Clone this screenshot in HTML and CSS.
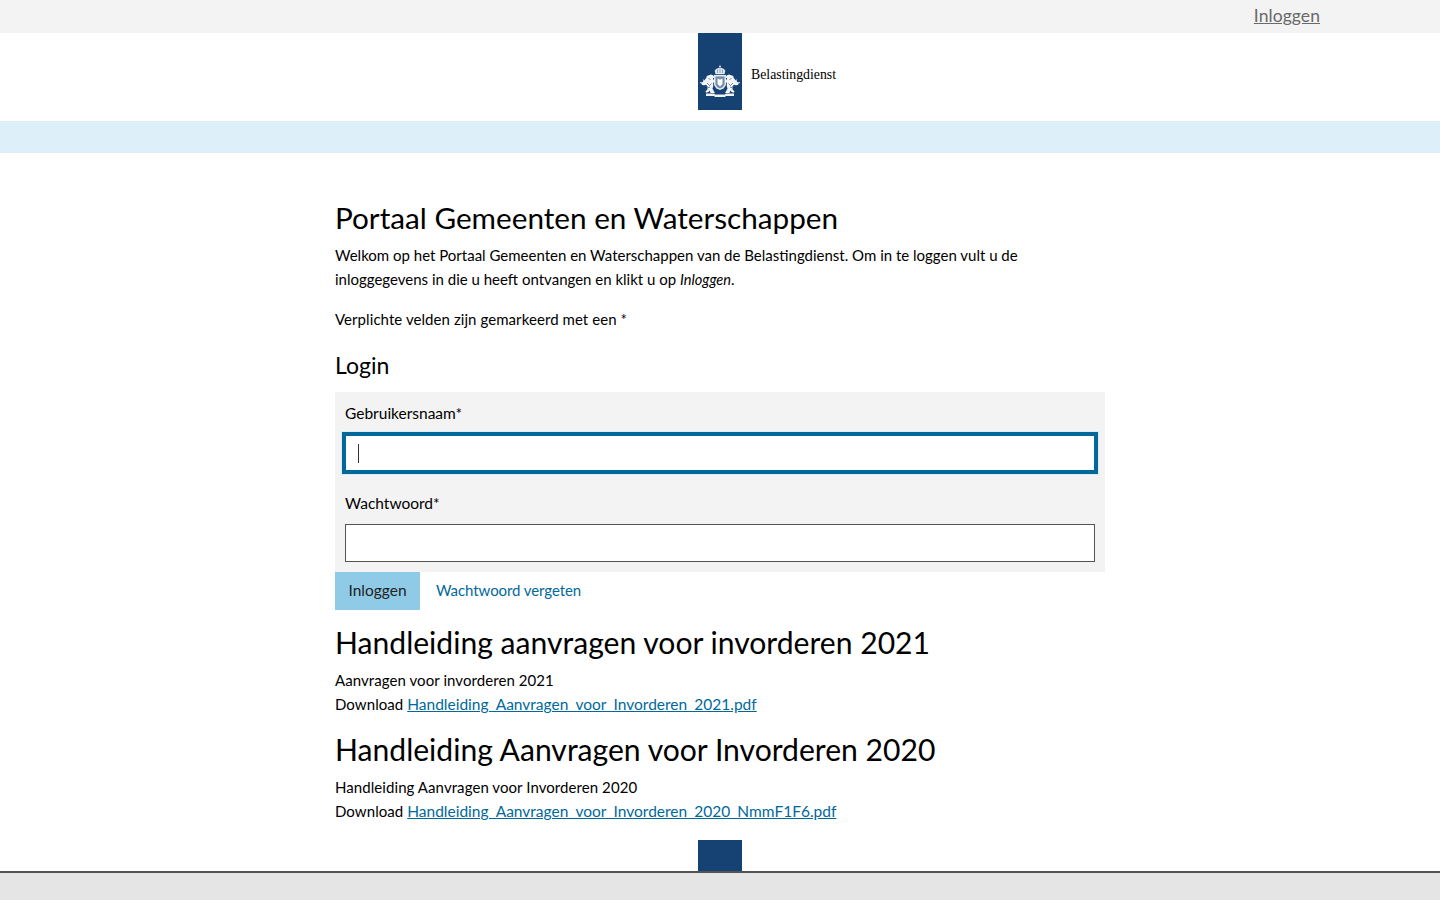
FILE: index.html
```html
<!DOCTYPE html>
<html lang="nl">
<head>
  <meta charset="UTF-8">
  <meta name="viewport" content="width=device-width, initial-scale=1.0">
  <title>Portaal Gemeenten en Waterschappen</title>
  <link rel="stylesheet" href="styles.css">
</head>
<body>
  <div class="topbar">
    <a class="topbar-link" href="#">Inloggen</a>
  </div>

  <header class="header">
    <div class="logo-block">
      <svg class="crest" viewBox="0 0 44 44" width="44" height="44" aria-hidden="true">
        <defs>
          <g id="lion">
            <path d="M13 14.500l2.500 1 .8 2-1.500 1 1 1.500 1.200.5v2l-2 .2.3 3-.8 3 1.500 2.500 1 1.800h-4.500l-.8-2.500-1.200 1.500-2.500.8-.5-1.500 1.800-1.500.3-3-1.500-2-2 .5-2-.2-.8-1.500-1.500-.8.8-.7 1.500.5 1-1 .5-2.500 1 1.500.7-1.700 1-.8.5-2z" fill="#f2f5f8"/>
            <path d="M9 23l2.500 2.500 2-2M10.500 18.500l2 1M9.500 28l2.500-1" stroke="#15406f" stroke-width=".6" fill="none"/>
          </g>
        </defs>
        <!-- kroon -->
        <circle cx="22" cy="6.500" r="1" fill="#dfe7ef"/>
        <path d="M17.500 14.200l-.8-3.500c1-1.800 3-2.900 5.300-2.900s4.300 1.100 5.300 2.900l-.8 3.500z" fill="#dfe7ef"/>
        <path d="M19.500 9.500v3.500M22 8.500v4.500M24.500 9.500v3.500" stroke="#6f8cab" stroke-width=".7" fill="none"/>
        <!-- schild -->
        <path d="M16 15h12v10l-2.300 3.500-3.700 1.500-3.700-1.500-2.300-3.500z" fill="#dfe7ef"/>
        <path d="M17.500 16.500h9v8l-1.800 2.800-2.700 1-2.700-1-1.800-2.800z" fill="#6f8cab"/>
        <path d="M19.500 18.500l2.500 1 2.500-1v5.500l-2.500 2.500-2.500-2.500z" fill="#fff"/>
        <!-- leeuwen -->
        <use href="#lion"/>
        <use href="#lion" transform="matrix(-1 0 0 1 44 0)"/>
        <!-- lint -->
        <path d="M8 33.500h8l1 1h10l1-1h8v2.500h-8l-1 1h-10l-1-1h-8z" fill="#eef2f6"/>
      </svg>
    </div>
    <span class="logo-text">Belastingdienst</span>
  </header>
  <div class="band"></div>

  <main class="content">
    <h1 class="page-title">Portaal Gemeenten en Waterschappen</h1>
    <p class="intro">Welkom op het Portaal Gemeenten en Waterschappen van de Belastingdienst. Om in te loggen vult u de inloggegevens in die u heeft ontvangen en klikt u op <em>Inloggen</em>.</p>
    <p class="required">Verplichte velden zijn gemarkeerd met een *</p>

    <h2>Login</h2>
    <form>
      <div class="fields">
        <label for="username">Gebruikersnaam*</label>
        <div class="input input-focus" id="username"><span class="caret"></span></div>
        <label for="password">Wachtwoord*</label>
        <input class="input" type="password" id="password">
      </div>
      <div class="actions">
        <button type="button" class="btn">Inloggen</button>
        <a class="forgot" href="#">Wachtwoord vergeten</a>
      </div>
    </form>

    <section class="doc">
      <h1>Handleiding aanvragen voor invorderen 2021</h1>
      <p>Aanvragen voor invorderen 2021<br>Download <a href="#">Handleiding_Aanvragen_voor_Invorderen_2021.pdf</a></p>
    </section>
    <section class="doc">
      <h1>Handleiding Aanvragen voor Invorderen 2020</h1>
      <p>Handleiding Aanvragen voor Invorderen 2020<br>Download <a href="#">Handleiding_Aanvragen_voor_Invorderen_2020_NmmF1F6.pdf</a></p>
    </section>
  </main>

  <footer class="footer">
    <div class="footer-logo"></div>
  </footer>
</body>
</html>
```

FILE: styles.css
```css
html, body {
  margin: 0;
  height: 900px;
  overflow: hidden;
}

body {
  display: flex;
  flex-direction: column;
  font-family: Lato, "Noto Sans", Arial, sans-serif;
  font-size: 15px;
  letter-spacing: .07px;
  line-height: 24px;
  color: #000;
  background-color: #fff;
}

a {
  color: #01689b;
}

.topbar {
  height: 33px;
  background-color: #f3f3f3;
  display: flex;
  justify-content: flex-end;
  padding-right: 120px;
}

.topbar-link {
  font-size: 17.500px;
  line-height: 31px;
  color: #696969;
}

.header {
  height: 88px;
  display: flex;
  align-items: flex-start;
  padding-left: calc(50% - 22px);
}

.logo-block {
  width: 44px;
  height: 77px;
  background-color: #154273;
  display: flex;
  align-items: flex-end;
}

.crest {
  display: block;
  margin-bottom: 6px;
}

.logo-text {
  font-family: "Liberation Serif", serif;
  font-size: 13.800px;
  letter-spacing: 0;
  line-height: 16px;
  margin: 34px 0 0 9px;
}

.band {
  height: 32px;
  background-color: #ddeff8;
}

.content {
  width: 770px;
  margin: 0 auto;
  padding-top: 47px;
  flex: 1;
}

h1 {
  font-size: 30.100px;
  font-weight: 400;
  letter-spacing: 0;
  line-height: 36px;
  margin: 0 0 7px;
}

.page-title {
  font-size: 29.700px;
}

h2 {
  font-size: 23px;
  font-weight: 400;
  letter-spacing: 0;
  line-height: 28px;
  margin: -1px 0 13px;
}

p {
  margin: 0;
}

.intro {
  width: 700px;
  margin-bottom: 16px;
  letter-spacing: 0;
}

.intro em {
  font-size: 14.600px;
  line-height: 0;
}

.required {
  margin-bottom: 21px;
}

.fields {
  background-color: #f3f3f3;
  padding: 9px 10px 10px;
}

label {
  display: block;
  font-size: 15.500px;
  letter-spacing: 0;
  line-height: 24px;
  margin-bottom: 9px;
}

.input {
  display: block;
  box-sizing: border-box;
  width: 100%;
  height: 38px;
  padding: 0 12px;
  background-color: #fff;
  border: 1px solid #535353;
  border-radius: 0;
}

.input-focus {
  display: flex;
  align-items: center;
  width: 756px;
  height: 42px;
  margin: -2px -3px 17px;
  border: 4px solid #01689b;
  outline: 1px solid #dfeaf1;
}

.caret {
  width: 1px;
  height: 19px;
  background-color: #333;
}

.actions {
  display: flex;
  align-items: center;
  gap: 16px;
}

.btn {
  height: 38px;
  width: 85px;
  padding: 0 0 2px;
  border: none;
  background-color: #8fcae7;
  color: #222;
  font-family: inherit;
  font-size: 15.500px;
}

.forgot {
  margin-bottom: 2px;
  letter-spacing: -.08px;
  text-decoration: none;
}

.doc {
  margin-top: 14px;
}

.doc h1 {
  margin-bottom: 8px;
}

.doc a {
  font-size: 15.500px;
  letter-spacing: 0;
}

.doc + .doc {
  margin-top: 15px;
}

.footer {
  height: 27px;
  border-top: 2px solid #535353;
  background-color: #e5e5e5;
  display: flex;
  justify-content: center;
  position: relative;
}

.footer-logo {
  position: absolute;
  top: -33px;
  width: 44px;
  height: 31px;
  background-color: #154273;
}
```
